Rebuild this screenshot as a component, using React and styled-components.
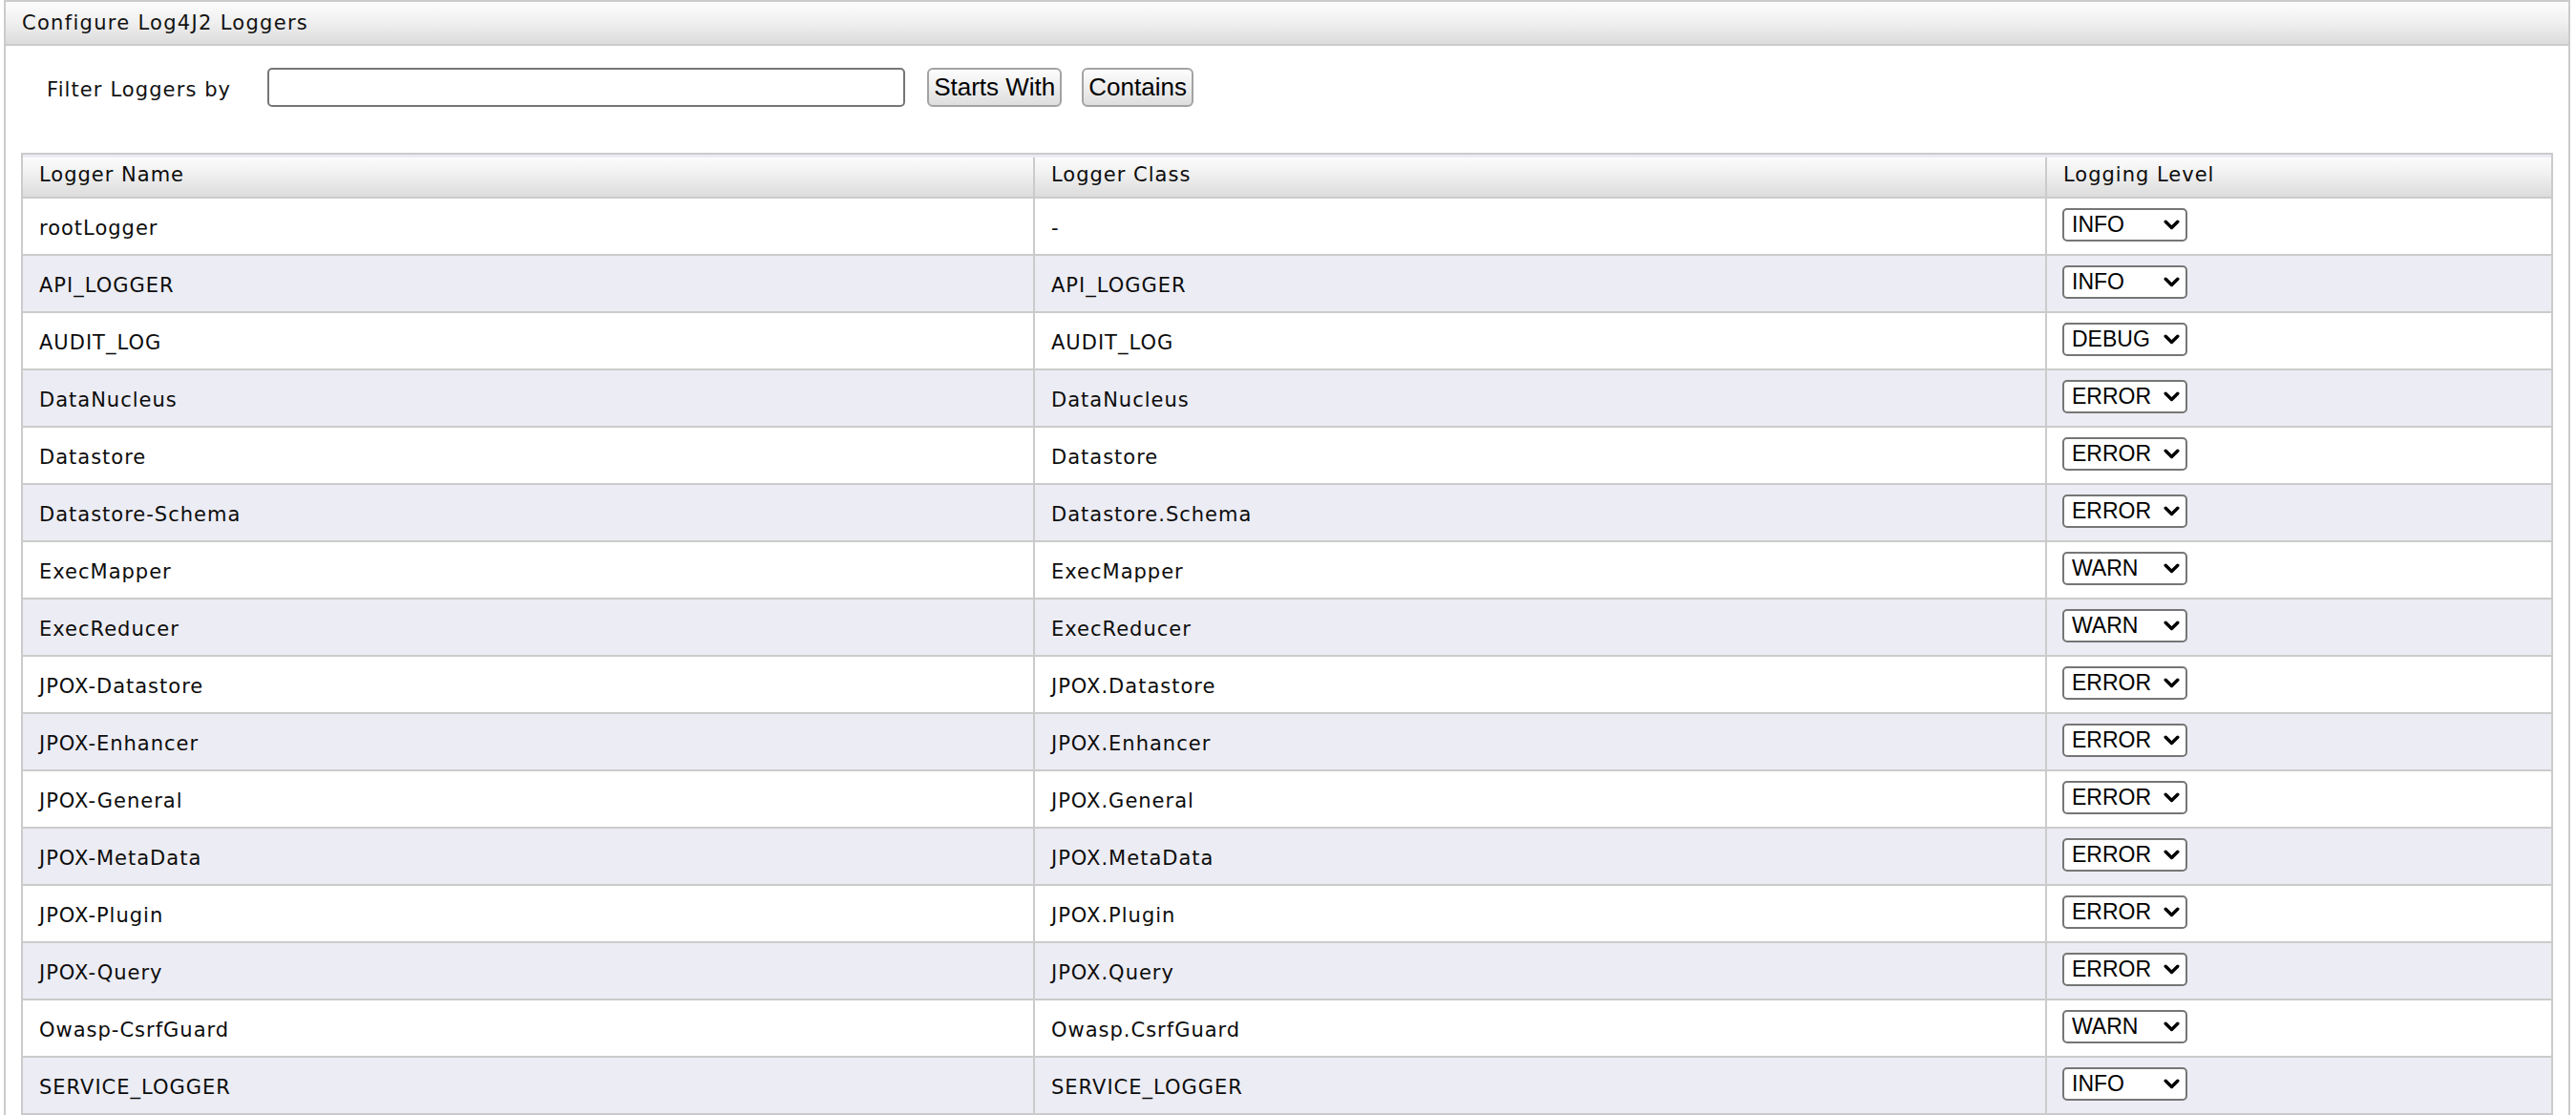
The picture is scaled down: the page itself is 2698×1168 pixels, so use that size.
import React, { useState } from 'react'
import styled, { createGlobalStyle } from 'styled-components';

const GlobalStyle = createGlobalStyle`
  html, body {
    margin: 0;
    padding: 0;
    background: #fff;
  }
  body {
    font-family: "DejaVu Sans", Verdana, sans-serif;
    color: #000;
  }
`;

const Panel = styled.div`
  margin: 0 6px 0 4px;
  border: 2px solid #cbcbcb;
  border-bottom: none;
  background: #fff;
`;

const PanelHeader = styled.div`
  height: 44px;
  display: flex;
  align-items: center;
  padding-left: 17px;
  background: linear-gradient(#fcfcfc, #f1f1f1 45%, #dcdcdc);
  border-bottom: 2px solid #cbcbcb;
  font-size: 21px;
  letter-spacing: 1.3px;
  color: #111;
`;

const FilterBar = styled.div`
  display: flex;
  align-items: center;
  height: 41px;
  margin-top: 23px;
  padding-left: 43px;
`;

const FilterLabel = styled.label`
  font-size: 21px;
  letter-spacing: 1.1px;
  color: #111;
  margin-right: 38px;
  padding-top: 4px;
`;

const FilterInput = styled.input`
  box-sizing: border-box;
  width: 668px;
  height: 41px;
  border: 2px solid #767676;
  border-radius: 5px;
  margin-right: 23px;
  font-size: 22px;
  padding: 0 8px;
  outline: none;
`;

const Button = styled.button`
  box-sizing: border-box;
  height: 41px;
  padding: 0 5px;
  margin-right: 21px;
  border: 2px solid #a3a3a3;
  border-radius: 6px;
  background: linear-gradient(#fdfdfd, #ececec 55%, #dedede);
  font-family: "Liberation Sans", Arial, sans-serif;
  font-size: 26px;
  color: #000;
  cursor: pointer;
`;

const TableBox = styled.div`
  margin: 48px 16px 0;
  border: 2px solid #cbcbcb;
  border-bottom: none;
`;

const Row = styled.div`
  display: grid;
  grid-template-columns: 1058px 1060px 1fr;
  height: 60px;
  box-sizing: border-box;
  border-bottom: 2px solid #cbcbcb;
  background: ${p => (p.$alt ? '#ececf4' : '#fff')};
`;

const HeaderRow = styled(Row)`
  height: 46px;
  border-top: 3px solid #ebebf5;
  background: linear-gradient(#fcfcfc, #f1f1f1 40%, #dcdcdc);
`;

const Cell = styled.div`
  display: flex;
  align-items: center;
  box-sizing: border-box;
  padding: ${p => (p.$head ? '0 0 5px 17px' : '4px 0 0 17px')};
  font-size: 21px;
  letter-spacing: 1px;
  color: #0c0c0c;
  border-left: ${p => (p.$first ? 'none' : '2px solid #cbcbcb')};
  white-space: nowrap;
`;

const LevelCell = styled(Cell)`
  padding: 0 0 4px 16px;
`;

const SelectWrap = styled.div`
  position: relative;
  width: 131px;
  height: 35px;
`;

const LevelSelect = styled.select`
  appearance: none;
  -webkit-appearance: none;
  box-sizing: border-box;
  width: 100%;
  height: 100%;
  border: 2px solid #767676;
  border-radius: 5px;
  background: #fff;
  padding: 0 0 0 8px;
  font-family: "Liberation Sans", Arial, sans-serif;
  font-size: 23px;
  color: #000;
  outline: none;
`;

const Chevron = styled.svg`
  position: absolute;
  right: 8px;
  top: 12px;
  width: 17px;
  height: 11px;
  pointer-events: none;
`;

const LEVELS = ['ALL', 'TRACE', 'DEBUG', 'INFO', 'WARN', 'ERROR', 'FATAL', 'OFF'];

const loggers = [
  { name: 'rootLogger', cls: '-', level: 'INFO' },
  { name: 'API_LOGGER', cls: 'API_LOGGER', level: 'INFO' },
  { name: 'AUDIT_LOG', cls: 'AUDIT_LOG', level: 'DEBUG' },
  { name: 'DataNucleus', cls: 'DataNucleus', level: 'ERROR' },
  { name: 'Datastore', cls: 'Datastore', level: 'ERROR' },
  { name: 'Datastore-Schema', cls: 'Datastore.Schema', level: 'ERROR' },
  { name: 'ExecMapper', cls: 'ExecMapper', level: 'WARN' },
  { name: 'ExecReducer', cls: 'ExecReducer', level: 'WARN' },
  { name: 'JPOX-Datastore', cls: 'JPOX.Datastore', level: 'ERROR' },
  { name: 'JPOX-Enhancer', cls: 'JPOX.Enhancer', level: 'ERROR' },
  { name: 'JPOX-General', cls: 'JPOX.General', level: 'ERROR' },
  { name: 'JPOX-MetaData', cls: 'JPOX.MetaData', level: 'ERROR' },
  { name: 'JPOX-Plugin', cls: 'JPOX.Plugin', level: 'ERROR' },
  { name: 'JPOX-Query', cls: 'JPOX.Query', level: 'ERROR' },
  { name: 'Owasp-CsrfGuard', cls: 'Owasp.CsrfGuard', level: 'WARN' },
  { name: 'SERVICE_LOGGER', cls: 'SERVICE_LOGGER', level: 'INFO' },
];

const App = () => {
    const [filter, setFilter] = useState('');
    const [levels, setLevels] = useState(loggers.map(l => l.level));

    const onLevelChange = (index, value) => {
        setLevels(levels.map((l, i) => (i === index ? value : l)));
    };

    return (
        <>
        <GlobalStyle />
        <Panel>
            <PanelHeader>Configure Log4J2 Loggers</PanelHeader>
            <FilterBar>
                <FilterLabel htmlFor="filter">Filter Loggers by</FilterLabel>
                <FilterInput id="filter" type="text" value={filter} onChange={e => setFilter(e.target.value)} />
                <Button type="button">Starts With</Button>
                <Button type="button">Contains</Button>
            </FilterBar>

            <TableBox>
                <HeaderRow>
                    <Cell $head $first>Logger Name</Cell>
                    <Cell $head>Logger Class</Cell>
                    <Cell $head>Logging Level</Cell>
                </HeaderRow>
                {
                    loggers.map((logger, index) => (
                        <Row key={logger.name} $alt={index % 2 === 1}>
                            <Cell $first>{logger.name}</Cell>
                            <Cell>{logger.cls}</Cell>
                            <LevelCell>
                                <SelectWrap>
                                    <LevelSelect value={levels[index]} onChange={e => onLevelChange(index, e.target.value)}>
                                        {LEVELS.map(l => <option key={l} value={l}>{l}</option>)}
                                    </LevelSelect>
                                    <Chevron viewBox="0 0 17 11">
                                        <path d="M2.2 2.2 L8.5 8.5 L14.8 2.2" fill="none" stroke="#000" strokeWidth="3.4" strokeLinecap="round" strokeLinejoin="round" />
                                    </Chevron>
                                </SelectWrap>
                            </LevelCell>
                        </Row>
                    ))
                }
            </TableBox>
        </Panel>
        </>
    )
}

export default App
